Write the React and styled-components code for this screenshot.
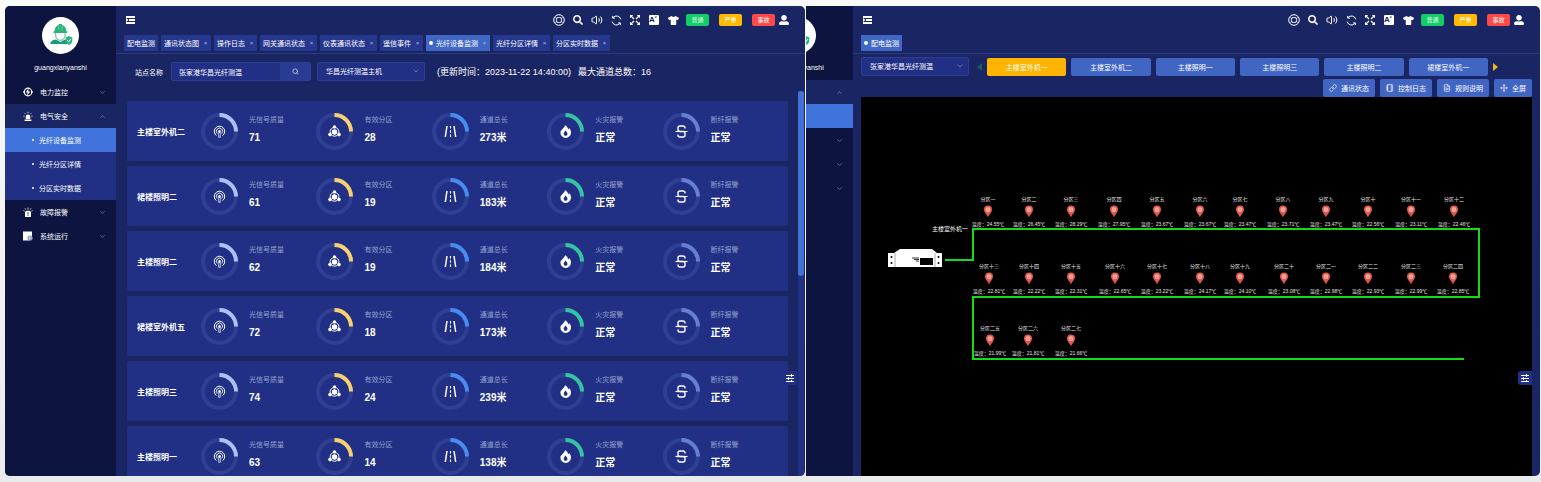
import { useState } from 'react';
import styled, { createGlobalStyle } from 'styled-components';
import {
  ChevronDown,
  ChevronUp,
  FileText,
  Link,
  Move,
  Notebook,
  Search,
  Volume2,
} from 'lucide-react';
import { FaSearch, FaTshirt, FaUserAlt } from 'react-icons/fa';

const GlobalStyle = createGlobalStyle`
  * {
    box-sizing: border-box;
  }
  body {
    margin: 0;
    background: linear-gradient(#fafafa, #e9eaeb);
    color: #fff;
    font-family: 'Liberation Sans', 'Noto Sans CJK SC', sans-serif;
    font-size: 7px;
  }
  button,
  input,
  select {
    margin: 0;
    padding: 0;
    border: none;
    color: inherit;
    font: inherit;
  }
  button {
    background: none;
    cursor: pointer;
  }
  svg {
    display: block;
    flex-shrink: 0;
  }
`;

const Page = styled.div`
  display: flex;
  gap: 1px;
  height: 100vh;
  padding: 6px 1px 6px 5px;
`;

const Panel = styled.section`
  display: flex;
  flex: ${({ $grow }) => $grow} 1 0;
  min-width: 0;
  overflow: hidden;
  background-color: #1a2663;
  border-radius: ${({ $cut }) => ($cut ? '0 5px 5px 0' : '5px')};
`;

const SidebarWrapper = styled.aside`
  display: flex;
  flex-direction: column;
  flex-shrink: 0;
  width: 111px;
  margin-left: ${({ $cut }) => ($cut ? '-64px' : '0')};
  background-color: #0c143f;
`;

const Profile = styled.div`
  display: flex;
  flex-direction: column;
  align-items: center;
  gap: 8px;
  height: 74px;
  padding-top: 11px;
  line-height: 12px;
`;

const Avatar = styled.div`
  width: 37px;
  height: 37px;
  border-radius: 50%;
  background-color: #fff;
`;

const MenuItem = styled.button`
  display: flex;
  align-items: center;
  gap: 7px;
  width: 100%;
  height: 24px;
  padding: 0 10px 0 18px;
  background-color: ${({ $open }) => ($open ? '#1a2663' : 'transparent')};
  text-align: left;
`;

const MenuLabel = styled.span`
  flex: 1;
`;

const SubItem = styled.a`
  display: flex;
  align-items: center;
  gap: 5px;
  height: 24px;
  padding-left: 27px;
  color: #fff;
  text-decoration: none;
  background-color: ${({ $active }) => ($active ? '#4073dc' : '#212f84')};
  &::before {
    content: '';
    width: 2px;
    height: 2px;
    border-radius: 50%;
    background-color: #fff;
  }
`;

const Main = styled.main`
  display: flex;
  flex-direction: column;
  flex: 1;
  min-width: 0;
  position: relative;
`;

const TopBarWrapper = styled.header`
  display: flex;
  align-items: center;
  gap: 7px;
  height: 28px;
  flex-shrink: 0;
  padding: 0 16px 0 8px;
`;

const IconButton = styled.button`
  display: flex;
  align-items: center;
  justify-content: center;
  width: 12px;
  height: 12px;
`;

const Spacer = styled.div`
  flex: 1;
`;

const Badges = styled.div`
  display: flex;
  gap: 10px;
`;

const Badge = styled.button`
  width: 23px;
  height: 12px;
  border-radius: 2px;
  font-size: 6px;
  line-height: 12px;
  background-color: ${({ $color }) => $color};
`;

const UserButton = styled(IconButton)`
  width: 10px;
  margin-left: -3px;
`;

const TabBar = styled.nav`
  display: flex;
  flex-shrink: 0;
  gap: 3px;
  height: 20px;
  padding: 1px 8px 2px;
  border-bottom: 1px solid #2b3b7f;
`;

const Tab = styled.button`
  display: flex;
  align-items: center;
  height: 16px;
  padding: 0 3px;
  white-space: nowrap;
  background-color: ${({ $active }) => ($active ? '#4167c5' : '#26378e')};
`;

const TabDot = styled.span`
  width: 4px;
  height: 4px;
  margin-right: 3px;
  border-radius: 50%;
  background-color: #fff;
`;

const TabClose = styled.span`
  width: 5px;
  margin-left: 4px;
  color: #b5c0ea;
  font-size: 6px;
  text-align: center;
`;

const FilterRow = styled.form`
  display: flex;
  align-items: center;
  flex-shrink: 0;
  padding: 8px 10px 10px 19px;
`;

const SearchBox = styled.div`
  display: flex;
  width: 140px;
  height: 19px;
  margin: 0 6px 0 8px;
  border: 1px solid #2d3f93;
  border-radius: 2px;
  overflow: hidden;
`;

const SearchInput = styled.input`
  flex: 1;
  min-width: 0;
  padding-left: 7px;
  background-color: #212f84;
`;

const SearchButton = styled.button`
  display: flex;
  align-items: center;
  justify-content: center;
  width: 30px;
  background-color: #293b93;
`;

const SelectWrapper = styled.div`
  position: relative;
  flex-shrink: 0;
  width: 108px;
  height: 19px;
  svg {
    position: absolute;
    top: 5px;
    right: 5px;
    color: #8e9bd0;
    pointer-events: none;
  }
`;

const SelectField = styled.select`
  width: 100%;
  height: 100%;
  padding-left: 8px;
  border: 1px solid #2d3f93;
  border-radius: 2px;
  appearance: none;
  background-color: #212f84;
`;

const Summary = styled.p`
  display: flex;
  gap: 7px;
  margin: 0 0 0 12px;
  font-size: 9px;
  white-space: nowrap;
`;

const ScrollArea = styled.div`
  display: flex;
  flex: 1;
  min-height: 0;
  padding-right: 1px;
`;

const CardList = styled.div`
  display: flex;
  flex-direction: column;
  flex: 1;
  gap: 5px;
  min-width: 0;
  padding: 10px 10px 0 11px;
  overflow: hidden;
`;

const ScrollTrack = styled.div`
  width: 6px;
  background-color: #212f84;
`;

const ScrollThumb = styled.div`
  height: 48%;
  border-radius: 3px;
  background-color: #4270d6;
`;

const Card = styled.article`
  display: grid;
  grid-template-columns: 64px repeat(5, 1fr);
  align-items: center;
  flex-shrink: 0;
  height: 60px;
  padding: 0 10px;
  border-radius: 2px;
  background-color: #213085;
`;

const CardTitle = styled.h2`
  margin: 0;
  font-size: 8px;
  white-space: nowrap;
`;

const StatWrapper = styled.div`
  display: flex;
  align-items: center;
  gap: 11px;
`;

const RingBox = styled.div`
  display: grid;
  place-items: center;
  > * {
    grid-area: 1 / 1;
  }
`;

const StatText = styled.div`
  display: flex;
  flex-direction: column;
  gap: 5px;
  padding-bottom: 4px;
  white-space: nowrap;
`;

const StatLabel = styled.span`
  color: #98a2cf;
  line-height: 12px;
`;

const StatValue = styled.strong`
  font-size: 10px;
  line-height: 14px;
`;

const SettingsHandle = styled.button`
  position: absolute;
  right: 8px;
  bottom: 91px;
  display: flex;
  align-items: center;
  justify-content: center;
  width: 14px;
  height: 14px;
  border-radius: 3px 0 0 3px;
  background-color: #212f84;
`;

const ChannelRow = styled.div`
  display: flex;
  align-items: center;
  flex-shrink: 0;
  gap: 5px;
  padding: 3px 42px 0 8px;
`;

const ChannelButton = styled.button`
  flex: 1;
  height: 18px;
  border-radius: 2px;
  white-space: nowrap;
  background-color: ${({ $active }) => ($active ? '#ffb400' : '#4065c3')};
`;

const ArrowButton = styled.button`
  display: flex;
  justify-content: flex-end;
  width: ${({ $wide }) => ($wide ? '8px' : '5px')};
`;

const ActionRow = styled.div`
  display: flex;
  justify-content: flex-end;
  flex-shrink: 0;
  gap: 5px;
  padding: 3px 8px 0;
`;

const ActionButton = styled.button`
  display: flex;
  align-items: center;
  gap: 4px;
  height: 18px;
  padding: 0 6px;
  border-radius: 2px;
  background-color: #4065c3;
`;

const Canvas = styled.div`
  position: relative;
  flex: 1;
  min-height: 0;
  margin: 0 8px;
  overflow: hidden;
  background-color: #000;
`;

const Wires = styled.svg`
  position: absolute;
  top: 0;
  left: 0;
`;

const HostLabel = styled.span`
  position: absolute;
  top: 127px;
  left: 71px;
  font-size: 6px;
  line-height: 10px;
`;

const ZoneNode = styled.div`
  position: absolute;
  top: ${({ $y }) => $y}px;
  left: ${({ $x }) => $x}px;
  display: flex;
  flex-direction: column;
  align-items: center;
  gap: 2px;
  width: 40px;
  margin-left: -20px;
  color: #e2e2e2;
  font-size: 5px;
  line-height: 8px;
  white-space: nowrap;
`;

const STATS = [
  { key: 'quality', label: '光信号质量', color: '#afc0f8', icon: AntennaIcon },
  { key: 'zones', label: '有效分区', color: '#f8d070', icon: NodesIcon },
  { key: 'length', label: '通道总长', color: '#488cf2', icon: RoadIcon },
  { key: 'fire', label: '火灾报警', color: '#36c3a1', icon: FlameIcon },
  { key: 'broken', label: '断纤报警', color: '#687dd4', icon: BreakIcon },
];

const CHANNELS = [
  { name: '主楼室外机二', quality: 71, zones: 28, length: '273米' },
  { name: '裙楼照明二', quality: 61, zones: 19, length: '183米' },
  { name: '主楼照明二', quality: 62, zones: 19, length: '184米' },
  { name: '裙楼室外机五', quality: 72, zones: 18, length: '173米' },
  { name: '主楼照明三', quality: 74, zones: 24, length: '239米' },
  { name: '主楼照明一', quality: 63, zones: 14, length: '138米' },
].map((channel) => ({ ...channel, fire: '正常', broken: '正常' }));

const TABS = [
  '配电监测',
  '通讯状态图',
  '操作日志',
  '网关通讯状态',
  '仪表通讯状态',
  '遥信事件',
  '光纤设备监测',
  '光纤分区详情',
  '分区实时数据',
];

const CHANNEL_BUTTONS = [
  '主楼室外机一',
  '主楼室外机二',
  '主楼照明一',
  '主楼照明三',
  '主楼照明二',
  '裙楼室外机一',
];

// [name, temperature, x]
const ZONE_ROWS = [
  {
    y: 98,
    zones: [
      ['一', '24.55', 127],
      ['二', '26.45', 168],
      ['三', '28.29', 210],
      ['四', '27.95', 253],
      ['五', '23.67', 296],
      ['六', '23.67', 339],
      ['七', '23.47', 379],
      ['八', '23.71', 422],
      ['九', '23.47', 465],
      ['十', '22.56', 507],
      ['十一', '23.11', 550],
      ['十二', '22.46', 593],
    ],
  },
  {
    y: 165,
    zones: [
      ['十三', '22.81', 128],
      ['十四', '22.22', 168],
      ['十五', '22.31', 210],
      ['十六', '22.65', 254],
      ['十七', '23.22', 296],
      ['十八', '24.17', 339],
      ['十九', '24.10', 379],
      ['二十', '23.08', 423],
      ['二一', '22.98', 465],
      ['二二', '22.93', 507],
      ['二三', '22.99', 550],
      ['二四', '22.85', 592],
    ],
  },
  {
    y: 227,
    zones: [
      ['二五', '21.99', 129],
      ['二六', '21.81', 167],
      ['二七', '21.66', 210],
    ],
  },
];

const FIBER_MENU = [
  { label: '电力监控', icon: PowerIcon },
  {
    label: '电气安全',
    icon: SirenIcon,
    children: ['光纤设备监测', '光纤分区详情', '分区实时数据'],
  },
  { label: '故障报警', icon: AlarmIcon },
  { label: '系统运行', icon: SystemIcon },
];

const POWER_MENU = [
  { label: '电力监控', icon: PowerIcon, children: ['配电监测'] },
  { label: '电气安全', icon: SirenIcon },
  { label: '故障报警', icon: AlarmIcon },
  { label: '系统运行', icon: SystemIcon },
];

function AntennaIcon() {
  return (
    <svg width="13" height="13" viewBox="0 0 13 13" fill="none" stroke="#fff">
      <path d="M3.4 10.6a5.2 5.2 0 1 1 6.2 0" />
      <path d="M4.3 8.4a3.1 3.1 0 1 1 4.4 0" strokeWidth="0.9" />
      <circle cx="6.5" cy="6.2" r="1.2" fill="#fff" stroke="none" />
      <path d="M5.7 7.5h1.6v4.8H5.7z" strokeWidth="0.7" />
    </svg>
  );
}

function NodesIcon() {
  return (
    <svg width="13" height="13" viewBox="0 0 13 13" fill="#fff">
      <circle cx="6.5" cy="6.8" r="4.4" fill="none" stroke="#fff" />
      <circle cx="6.5" cy="1.9" r="1.7" />
      <circle cx="2" cy="9.6" r="1.8" />
      <circle cx="11" cy="9.6" r="1.8" />
      <path d="M6.5 3.9 9.1 5.4v3L6.5 9.9 3.9 8.4v-3Z" />
    </svg>
  );
}

function RoadIcon() {
  return (
    <svg width="13" height="13" viewBox="0 0 13 13" stroke="#fff">
      <path d="M3 1 1.3 12M10 1l1.7 11" strokeWidth="1.5" />
      <path d="M6.5 1v2.5M6.5 5.2v2.6M6.5 9.5V12" strokeWidth="1.1" />
    </svg>
  );
}

function FlameIcon() {
  return (
    <svg width="13" height="13" viewBox="0 0 13 13" fill="#fff">
      <path
        fillRule="evenodd"
        d="M6 .3c2 1 3 2.400 3.100 4.200.6-.3.900-.8 1-1.400 1.200 1.300 1.900 2.800 1.900 4.500a5.300 5.300 0 0 1-10.600 0C1.400 4.800 5.200 3.700 6 .3ZM6.600 5.600C5.800 6.900 4.700 7.500 4.700 8.900a1.900 1.900 0 0 0 3.800 0c0-1.300-.9-2-1.900-3.300Z"
      />
    </svg>
  );
}

function BreakIcon() {
  return (
    <svg width="13" height="13" viewBox="0 0 13 13" fill="none" stroke="#fff">
      <path
        d="M10 3.500V3a2 2 0 0 0-2-2H5a2 2 0 0 0-2 2v1.500a2 2 0 0 0 2 2h3a2 2 0 0 1 2 2V10a2 2 0 0 1-2 2H5a2 2 0 0 1-2-2v-.5"
        strokeWidth="1.400"
      />
      <path d="M0.500 6.500h12" strokeWidth="1.200" />
    </svg>
  );
}

function PowerIcon() {
  return (
    <svg width="10" height="10" viewBox="0 0 10 10">
      <circle cx="5" cy="5" r="3.8" fill="none" stroke="#fff" strokeWidth="1.2" />
      <path d="M0 5h2M8 5h2" stroke="#fff" />
      <path d="M5.7 1.3 2.7 5.5h1.9L4.1 8.8l3.2-4.4H5.3Z" fill="#fff" />
    </svg>
  );
}

function SirenIcon() {
  return (
    <svg width="10" height="10" viewBox="0 0 10 10" fill="#fff">
      <path d="M2.8 8V5.6a2.2 2.2 0 0 1 4.4 0V8ZM1.6 8.4h6.8V10H1.6Z" />
      <path
        d="M5 .8v1.4M1.7 2.2l.9.9M8.3 2.2l-.9.9M.4 5.2h1.3M9.6 5.2H8.3"
        stroke="#fff"
        strokeWidth="0.8"
      />
    </svg>
  );
}

function AlarmIcon() {
  return (
    <svg width="10" height="10" viewBox="0 0 10 10" fill="#fff">
      <path d="M2 10V5.5A1.8 1.8 0 0 1 3.8 3.7h2.4A1.8 1.8 0 0 1 8 5.5V10Z" />
      <path
        d="M5 .5v2M2 1.3l.9 1.4M8 1.3l-.9 1.4M.4 3.6l1.2.6M9.6 3.6l-1.2.6"
        stroke="#fff"
        strokeWidth="0.8"
      />
      <path d="M5 5.2v2.2M5 8.2v.8" stroke="#0c143f" strokeWidth="0.9" />
    </svg>
  );
}

function SystemIcon() {
  return (
    <svg width="10" height="10" viewBox="0 0 10 10">
      <path d="M0 .5h9v6L6 9.500H0Z" fill="#fff" />
      <circle cx="7" cy="7" r="2.6" fill="#8e98b8" />
      <path d="M6.8 4.6v4.8M4.6 7h4.8" stroke="#dfe4f2" strokeWidth="0.6" />
    </svg>
  );
}

function MenuFoldIcon() {
  return (
    <svg width="10" height="8" viewBox="0 0 10 8" fill="#fff">
      <path d="M1 0h9v2H1zM4 3h6v2H4zM1 6h9v2H1zM1 2l2.500 2L1 6z" />
    </svg>
  );
}

function RingIcon() {
  return (
    <svg width="12" height="12" viewBox="0 0 12 12" fill="none" stroke="#fff">
      <circle cx="6" cy="6" r="5.3" />
      <rect x="3.5" y="3.5" width="5" height="5" rx="1.8" />
      <path
        d="m2.2 3.4 1.6 1M9.8 3.4l-1.6 1M2.2 8.6l1.6-1M9.8 8.6l-1.6-1"
        strokeWidth="0.7"
      />
    </svg>
  );
}

function RefreshIcon() {
  return (
    <svg width="11" height="11" viewBox="0 0 11 11" fill="none" stroke="#fff">
      <path d="M1.2 6.6A4.4 4.4 0 0 0 8.9 8.4M9.8 4.4A4.4 4.4 0 0 0 2.1 2.6" />
      <path d="M1.6.9v2.2h2.3M9.4 10.1V7.9H7.1" />
    </svg>
  );
}

function ExpandIcon() {
  return (
    <svg width="10" height="10" viewBox="0 0 10 10" fill="#fff" stroke="#fff">
      <path d="M1 1l3 3M9 1 6 4M1 9l3-3M9 9 6 6" strokeWidth="1.2" />
      <path
        d="M0 0h3.2L0 3.2zM10 0v3.2L6.8 0zM0 10V6.8L3.2 10zM10 10H6.8L10 6.8z"
        stroke="none"
      />
    </svg>
  );
}

const FontBox = styled.span`
  width: 10px;
  height: 10px;
  border-radius: 1px;
  background-color: #fff;
  color: #1a2663;
  font-size: 8px;
  font-weight: 700;
  line-height: 10px;
  text-align: left;
  sup {
    font-size: 4px;
    line-height: 0;
  }
`;

function SlidersIcon() {
  return (
    <svg width="8" height="8" viewBox="0 0 8 8" stroke="#fff">
      <path d="M0 1.5h8M0 4.500h8M0 7.500h8" />
      <path d="M5.5 0v3M2.5 3v3M5.500 6v2" />
    </svg>
  );
}

function WorkerIcon() {
  return (
    <svg width="37" height="37" viewBox="0 0 37 37" fill="#2eb37d">
      <path d="M12.5 14c0-3.400 2-5.600 4.200-6.100V7h3.400v.9c2.300.5 4.200 2.700 4.200 6.100l1 .4v1.500H11.500v-1.500Z" />
      <path
        d="M13.700 16v2.300c0 3 2 5 4.700 5s4.700-2 4.700-5V16"
        fill="none"
        stroke="#2eb37d"
        strokeWidth="0.900"
      />
      <path
        d="M8.300 27c0-3 1.900-4 5.600-4.600l4.500 2.500 4.400-2.500 1.800.8c-.5 1.300 0 2.700 1 3.800Z"
        fill="#169b80"
      />
      <path d="m27 19 3.300 1.400v3.400c0 2-1.400 3.400-3.300 4.200-1.900-.8-3.300-2.200-3.300-4.200v-3.400Z" />
      <path d="m25.300 23.300 1.400 1.500 2.300-2.800" fill="none" stroke="#fff" />
      <path d="M16.700 8.500v4.500M20.100 8.500v4.500" stroke="#8fdcb9" strokeWidth="0.500" />
    </svg>
  );
}

function PinIcon() {
  return (
    <svg width="10" height="13" viewBox="0 0 10 13">
      <path
        d="M5 12.500C4.300 9.800 1 8 1 4.600a4 4 0 0 1 8 0C9 8 5.700 9.800 5 12.500Z"
        fill="#e2574c"
      />
      <circle cx="5" cy="4.700" r="2.400" fill="#f8b9ae" />
      <path d="M3.600 4h2.800M3.600 5.400h2.800" stroke="#e2574c" strokeWidth="0.500" />
    </svg>
  );
}

const ProgressRing = ({ color, icon: Icon }) => (
  <RingBox>
    <svg width="37" height="37" viewBox="0 0 37 37" fill="none" strokeWidth="4">
      <circle cx="18.5" cy="18.5" r="16.5" stroke="#2f4093" />
      <path d="M18.500 2a16.500 16.500 0 0 1 16.500 16.500" stroke={color} />
    </svg>
    <Icon />
  </RingBox>
);

const Sidebar = ({ cut, menu }) => {
  const [selected, setSelected] = useState(
    menu.find((item) => item.children).children[0]
  );

  return (
    <SidebarWrapper $cut={cut}>
      <Profile>
        <Avatar>
          <WorkerIcon />
        </Avatar>
        guangxianyanshi
      </Profile>
      {menu.map(({ label, icon: Icon, children }) => (
        <div key={label}>
          <MenuItem $open={!!children} aria-label={label}>
            <Icon />
            <MenuLabel>{cut ? null : label}</MenuLabel>
            {children ? (
              <ChevronUp size={7} color="#a6aed0" />
            ) : (
              <ChevronDown size={7} color="#a6aed0" />
            )}
          </MenuItem>
          {children?.map((child) => (
            <SubItem
              key={child}
              href="#"
              aria-label={child}
              $active={child === selected}
              onClick={() => setSelected(child)}
            >
              {cut ? null : child}
            </SubItem>
          ))}
        </div>
      ))}
    </SidebarWrapper>
  );
};

const TopBar = () => (
  <TopBarWrapper>
    <IconButton aria-label="收起菜单">
      <MenuFoldIcon />
    </IconButton>
    <Spacer />
    <IconButton aria-label="帮助">
      <RingIcon />
    </IconButton>
    <IconButton aria-label="搜索">
      <FaSearch size={10} />
    </IconButton>
    <IconButton aria-label="声音">
      <Volume2 size={12} />
    </IconButton>
    <IconButton aria-label="刷新">
      <RefreshIcon />
    </IconButton>
    <IconButton aria-label="全屏">
      <ExpandIcon />
    </IconButton>
    <IconButton aria-label="字号">
      <FontBox>
        A<sup>z</sup>
      </FontBox>
    </IconButton>
    <IconButton aria-label="主题">
      <FaTshirt size={11} />
    </IconButton>
    <Badges>
      <Badge $color="#13ce66">普通</Badge>
      <Badge $color="#ffba00">严重</Badge>
      <Badge $color="#ff4949">事故</Badge>
    </Badges>
    <UserButton aria-label="用户">
      <FaUserAlt size={10} />
    </UserButton>
  </TopBarWrapper>
);

const Select = ({ label, value }) => (
  <SelectWrapper>
    <SelectField aria-label={label} defaultValue={value}>
      <option>{value}</option>
    </SelectField>
    <ChevronDown size={8} />
  </SelectWrapper>
);

const Settings = () => (
  <SettingsHandle aria-label="设置">
    <SlidersIcon />
  </SettingsHandle>
);

const DevicePanel = () => {
  const [active, setActive] = useState('光纤设备监测');

  return (
    <Panel $grow={800}>
      <Sidebar menu={FIBER_MENU} />
      <Main>
        <TopBar />
        <TabBar>
          {TABS.map((tab, index) => (
            <Tab
              key={tab}
              $active={tab === active}
              onClick={() => setActive(tab)}
            >
              {tab === active ? <TabDot /> : null}
              {tab}
              {index > 0 ? <TabClose>×</TabClose> : null}
            </Tab>
          ))}
        </TabBar>
        <FilterRow onSubmit={(e) => e.preventDefault()}>
          <label htmlFor="station">站点名称</label>
          <SearchBox>
            <SearchInput id="station" defaultValue="张家港华昌光纤测温" />
            <SearchButton aria-label="查询">
              <Search size={7} />
            </SearchButton>
          </SearchBox>
          <Select label="测温主机" value="华昌光纤测温主机" />
          <Summary>
            <span>(更新时间：2023-11-22 14:40:00)</span>
            <span>最大通道总数：16</span>
          </Summary>
        </FilterRow>
        <ScrollArea>
          <CardList>
            {CHANNELS.map((channel) => (
              <Card key={channel.name}>
                <CardTitle>{channel.name}</CardTitle>
                {STATS.map(({ key, label, color, icon }) => (
                  <StatWrapper key={key}>
                    <ProgressRing color={color} icon={icon} />
                    <StatText>
                      <StatLabel>{label}</StatLabel>
                      <StatValue>{channel[key]}</StatValue>
                    </StatText>
                  </StatWrapper>
                ))}
              </Card>
            ))}
          </CardList>
          <ScrollTrack>
            <ScrollThumb />
          </ScrollTrack>
        </ScrollArea>
        <Settings />
      </Main>
    </Panel>
  );
};

const FiberDiagram = () => (
  <Canvas>
    <Wires width="671" height="300" viewBox="0 0 671 300">
      <path
        d="M84 163h28v-31h506v68H112v62h491"
        fill="none"
        stroke="#14dc14"
        strokeWidth="2"
      />
      <g transform="translate(27 152)">
        <path d="M6 4 12 0h32l5 4ZM0 4h54v14H0Z" fill="#fff" />
        <path d="M7 4v14M47 4v14" stroke="#777" strokeWidth="0.6" />
        <path d="M32 9h13v7H32Z" />
        <path d="M24 9h7M26 10.500h5M28 12h3" stroke="#000" strokeWidth="0.8" />
        <circle cx="3.500" cy="8" r="1" />
        <circle cx="3.500" cy="14" r="1" />
        <circle cx="50.500" cy="8" r="1" />
        <circle cx="50.500" cy="14" r="1" />
      </g>
    </Wires>
    <HostLabel>主楼室外机一</HostLabel>
    {ZONE_ROWS.map(({ y, zones }) =>
      zones.map(([name, temperature, x]) => (
        <ZoneNode key={name} $x={x} $y={y}>
          <span>分区{name}</span>
          <PinIcon />
          <span>温度：{temperature}℃</span>
        </ZoneNode>
      ))
    )}
  </Canvas>
);

const PowerPanel = () => {
  const [channel, setChannel] = useState(CHANNEL_BUTTONS[0]);

  return (
    <Panel $grow={734} $cut>
      <Sidebar cut menu={POWER_MENU} />
      <Main>
        <TopBar />
        <TabBar>
          <Tab $active>
            <TabDot />
            配电监测
          </Tab>
        </TabBar>
        <ChannelRow>
          <Select label="站点" value="张家港华昌光纤测温" />
          <ArrowButton $wide aria-label="上一个">
            <svg width="5" height="8" viewBox="0 0 5 8" fill="#1c5a5c">
              <path d="M5 0v8L0 4z" />
            </svg>
          </ArrowButton>
          {CHANNEL_BUTTONS.map((name) => (
            <ChannelButton
              key={name}
              $active={name === channel}
              onClick={() => setChannel(name)}
            >
              {name}
            </ChannelButton>
          ))}
          <ArrowButton aria-label="下一个">
            <svg width="5" height="8" viewBox="0 0 5 8" fill="#f5b90f">
              <path d="M0 0v8l5-4z" />
            </svg>
          </ArrowButton>
        </ChannelRow>
        <ActionRow>
          <ActionButton>
            <Link size={8} />
            通讯状态
          </ActionButton>
          <ActionButton>
            <Notebook size={8} />
            控制日志
          </ActionButton>
          <ActionButton>
            <FileText size={8} />
            规则说明
          </ActionButton>
          <ActionButton>
            <Move size={8} />
            全屏
          </ActionButton>
        </ActionRow>
        <FiberDiagram />
        <Settings />
      </Main>
    </Panel>
  );
};

const App = () => (
  <>
    <GlobalStyle />
    <Page>
      <DevicePanel />
      <PowerPanel />
    </Page>
  </>
);

export default App;
